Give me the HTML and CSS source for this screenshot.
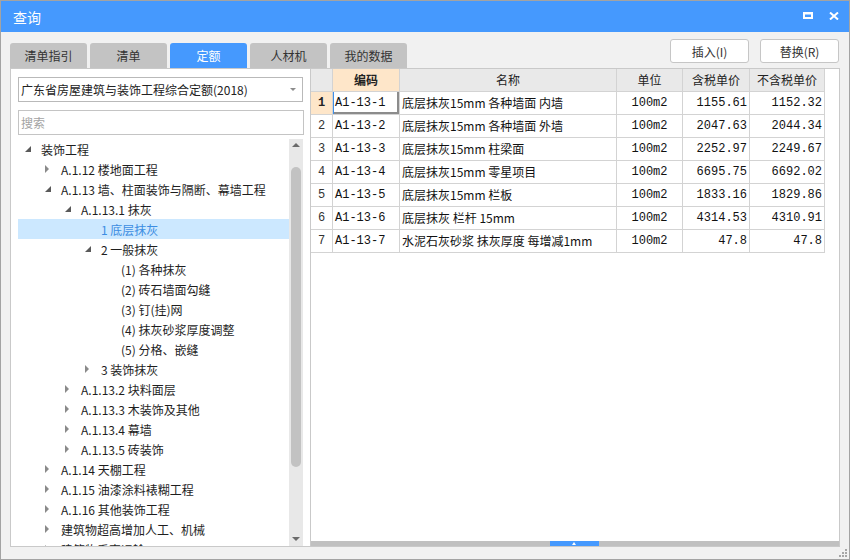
FILE: index.html
```html
<!DOCTYPE html>
<html lang="zh">
<head>
<meta charset="utf-8">
<title>查询</title>
<link rel="stylesheet" href="styles.css">
</head>
<body>
<div class="window">
  <div class="titlebar">
    <span class="title">查询</span>
    <div class="controls">
      <svg class="ico-max" width="10" height="7" viewBox="0 0 10 7"><path fill="#fff" fill-rule="evenodd" d="M0 0H10V7H0Z M2 2.5V5H8V2.5Z"/></svg>
      <svg class="ico-close" width="10" height="8" viewBox="0 0 10 8"><path d="M1 0.5L9 7.5M9 0.5L1 7.5" stroke="#fff" stroke-width="2"/></svg>
    </div>
  </div>

  <div class="toolbar">
    <div class="tabs">
      <div class="tab">清单指引</div>
      <div class="tab">清单</div>
      <div class="tab active">定额</div>
      <div class="tab">人材机</div>
      <div class="tab">我的数据</div>
    </div>
    <div class="actions">
      <button class="btn">插入(I)</button>
      <button class="btn">替换(R)</button>
    </div>
  </div>

  <div class="main">
    <div class="left">
      <div class="select"><span>广东省房屋建筑与装饰工程综合定额(2018)</span><span class="caret"></span></div>
      <div class="search">搜索</div>
      <div class="tree-wrap">
        <div class="tree">
          <div class="node l0"><span class="tg open"></span><span>装饰工程</span></div>
          <div class="node l1"><span class="tg closed"></span><span>A.1.12 楼地面工程</span></div>
          <div class="node l1"><span class="tg open"></span><span>A.1.13 墙、柱面装饰与隔断、幕墙工程</span></div>
          <div class="node l2"><span class="tg open"></span><span>A.1.13.1 抹灰</span></div>
          <div class="node l3 selected"><span class="tg"></span><span>1 底层抹灰</span></div>
          <div class="node l3"><span class="tg open"></span><span>2 一般抹灰</span></div>
          <div class="node l4"><span class="tg"></span><span>(1) 各种抹灰</span></div>
          <div class="node l4"><span class="tg"></span><span>(2) 砖石墙面勾缝</span></div>
          <div class="node l4"><span class="tg"></span><span>(3) 钉(挂)网</span></div>
          <div class="node l4"><span class="tg"></span><span>(4) 抹灰砂浆厚度调整</span></div>
          <div class="node l4"><span class="tg"></span><span>(5) 分格、嵌缝</span></div>
          <div class="node l3"><span class="tg closed"></span><span>3 装饰抹灰</span></div>
          <div class="node l2"><span class="tg closed"></span><span>A.1.13.2 块料面层</span></div>
          <div class="node l2"><span class="tg closed"></span><span>A.1.13.3 木装饰及其他</span></div>
          <div class="node l2"><span class="tg closed"></span><span>A.1.13.4 幕墙</span></div>
          <div class="node l2"><span class="tg closed"></span><span>A.1.13.5 砖装饰</span></div>
          <div class="node l1"><span class="tg closed"></span><span>A.1.14 天棚工程</span></div>
          <div class="node l1"><span class="tg closed"></span><span>A.1.15 油漆涂料裱糊工程</span></div>
          <div class="node l1"><span class="tg closed"></span><span>A.1.16 其他装饰工程</span></div>
          <div class="node l1"><span class="tg closed"></span><span>建筑物超高增加人工、机械</span></div>
          <div class="node l1"><span class="tg closed"></span><span>建筑物垂直运输</span></div>
        </div>
        <div class="vscroll">
          <span class="arrow-up"></span>
          <span class="thumb"></span>
          <span class="arrow-down"></span>
        </div>
      </div>
    </div>

    <div class="right">
      <div class="grid">
        <div class="hd"></div>
        <div class="hd key">编码</div>
        <div class="hd">名称</div>
        <div class="hd">单位</div>
        <div class="hd">含税单价</div>
        <div class="hd">不含税单价</div>

        <div class="rn cur">1</div><div class="c code sel">A1-13-1</div><div class="c name">底层抹灰15mm 各种墙面 内墙</div><div class="c unit">100m2</div><div class="c num">1155.61</div><div class="c num">1152.32</div>
        <div class="rn">2</div><div class="c code">A1-13-2</div><div class="c name">底层抹灰15mm 各种墙面 外墙</div><div class="c unit">100m2</div><div class="c num">2047.63</div><div class="c num">2044.34</div>
        <div class="rn">3</div><div class="c code">A1-13-3</div><div class="c name">底层抹灰15mm 柱梁面</div><div class="c unit">100m2</div><div class="c num">2252.97</div><div class="c num">2249.67</div>
        <div class="rn">4</div><div class="c code">A1-13-4</div><div class="c name">底层抹灰15mm 零星项目</div><div class="c unit">100m2</div><div class="c num">6695.75</div><div class="c num">6692.02</div>
        <div class="rn">5</div><div class="c code">A1-13-5</div><div class="c name">底层抹灰15mm 栏板</div><div class="c unit">100m2</div><div class="c num">1833.16</div><div class="c num">1829.86</div>
        <div class="rn">6</div><div class="c code">A1-13-6</div><div class="c name">底层抹灰 栏杆 15mm</div><div class="c unit">100m2</div><div class="c num">4314.53</div><div class="c num">4310.91</div>
        <div class="rn">7</div><div class="c code">A1-13-7</div><div class="c name">水泥石灰砂浆 抹灰厚度 每增减1mm</div><div class="c unit">100m2</div><div class="c num">47.8</div><div class="c num">47.8</div>
      </div>
      <div class="spacer"></div>
      <div class="hscroll"><span class="hthumb"></span></div>
    </div>
  </div>

  <div class="footer">
    <svg width="9" height="9" viewBox="0 0 9 9"><g fill="#a6a6a6"><rect x="6" y="0" width="2" height="2"/><rect x="3" y="3" width="2" height="2"/><rect x="6" y="3" width="2" height="2"/><rect x="0" y="6" width="2" height="2"/><rect x="3" y="6" width="2" height="2"/><rect x="6" y="6" width="2" height="2"/></g></svg>
  </div>
</div>
</body>
</html>
```

FILE: styles.css
```css
* { box-sizing: border-box; }

body {
  margin: 0;
  font-family: "Noto Sans CJK SC", "Noto Sans", sans-serif;
  font-size: 12px;
  color: #222;
}

.window {
  width: 850px;
  height: 560px;
  border: 1px solid #a3a3a3;
  background: #f1f1f1;
  display: flex;
  flex-direction: column;
  overflow: hidden;
}

/* title bar */
.titlebar {
  height: 31px;
  flex: none;
  background: #4599fe;
  display: flex;
  align-items: center;
  padding: 0 10px 0 12px;
  color: #fff;
}
.title { flex: 1; font-size: 14px; }
.controls { display: flex; align-items: center; gap: 16px; }
.ico-max { margin-top: -2px; }
.ico-close { margin-top: -1px; }

/* toolbar */
.toolbar {
  height: 36px;
  flex: none;
  display: flex;
  padding: 0 10px 0 9px;
}
.tabs { display: flex; gap: 3px; align-self: flex-end; }
.tab {
  width: 77px;
  height: 25px;
  line-height: 25px;
  text-align: center;
  background: #c3c3c3;
  border-radius: 3px 3px 0 0;
  color: #333;
  font-size: 12px;
}
.tab.active { background: #4599fe; color: #fff; }
.actions { margin-left: auto; display: flex; gap: 11px; padding-top: 7px; }
.btn {
  width: 79px;
  height: 24px;
  padding: 0;
  border: 1px solid #c6c6c6;
  border-radius: 3px;
  background: #fff;
  font-family: inherit;
  font-size: 12px;
  color: #333;
}

/* main */
.main {
  flex: 1;
  display: flex;
  padding: 0 9px;
  min-height: 0;
}

.left {
  width: 301px;
  flex: none;
  background: #fff;
  border: 1px solid #c9c9c9;
  display: flex;
  flex-direction: column;
  padding: 8px 0 0 7px;
}
.select {
  width: 285px;
  height: 25px;
  border: 1px solid #b9b9b9;
  display: flex;
  align-items: center;
  padding-left: 2px;
  color: #222;
}
.caret {
  margin-left: auto;
  margin-right: 6px;
  width: 0;
  height: 0;
  border-left: 3px solid transparent;
  border-right: 3px solid transparent;
  border-top: 3px solid #8c8c8c;
}
.search {
  width: 286px;
  height: 25px;
  margin-top: 8px;
  border: 1px solid #c4c4c4;
  padding-left: 2px;
  line-height: 23px;
  color: #a3a3a3;
}
.tree-wrap {
  flex: 1;
  min-height: 0;
  margin-top: 4px;
  display: flex;
}
.tree {
  width: 271px;
  flex: none;
  overflow: hidden;
}
.node {
  height: 20px;
  display: flex;
  align-items: center;
  white-space: nowrap;
  color: #1e1e1e;
}
.node.l0 { padding-left: 7px; }
.node.l1 { padding-left: 27px; }
.node.l2 { padding-left: 47px; }
.node.l3 { padding-left: 67px; }
.node.l4 { padding-left: 87px; }
.node.selected { background: #cce8ff; color: #3c8de2; }
.tg { width: 16px; flex: none; height: 8px; position: relative; }
.tg.open::before {
  content: "";
  position: absolute;
  left: 0;
  top: 1px;
  border-bottom: 6px solid #595959;
  border-left: 6px solid transparent;
}
.tg.closed::before {
  content: "";
  position: absolute;
  left: 0;
  top: 0;
  border-left: 4px solid #8a8a8a;
  border-top: 4px solid transparent;
  border-bottom: 4px solid transparent;
}

.vscroll {
  width: 14px;
  flex: none;
  background: #e8e8e8;
  display: flex;
  flex-direction: column;
  align-items: center;
}
.arrow-up {
  margin-top: 4px;
  border-left: 4px solid transparent;
  border-right: 4px solid transparent;
  border-bottom: 4px solid #6b6b6b;
}
.thumb {
  margin-top: 20px;
  width: 10px;
  height: 300px;
  border-radius: 5px;
  background: #c2c2c2;
}
.arrow-down {
  margin-top: auto;
  margin-bottom: 5px;
  border-left: 4px solid transparent;
  border-right: 4px solid transparent;
  border-top: 4px solid #6b6b6b;
}

/* right table */
.right {
  flex: 1;
  background: #fff;
  border: 1px solid #c9c9c9;
  border-left: none;
  display: flex;
  flex-direction: column;
}
.grid {
  display: grid;
  grid-template-columns: 22px 67px 217px 66px 67px 75px;
  grid-auto-rows: 23px;
  width: 514px;
}
.grid > div {
  border-right: 1px solid #d3d3d3;
  border-bottom: 1px solid #d3d3d3;
  white-space: nowrap;
  overflow: hidden;
}
.hd {
  background: #e9e9e9;
  text-align: center;
  line-height: 22px;
  font-size: 12px;
  color: #222;
}
.hd.key { background: #fee6c9; font-weight: bold; }
.rn, .c {
  font-family: "Liberation Mono", "Noto Sans CJK SC", monospace;
  font-size: 12px;
  line-height: 22px;
  color: #111;
}
.rn { text-align: center; color: #333; }
.rn.cur { background: #fee6c9; font-weight: bold; color: #222; }
.code { padding-left: 2px; }
.name { padding-left: 2px; font-family: "Noto Sans CJK SC", sans-serif; }
.unit { text-align: center; }
.num { text-align: right; padding-right: 2px; }
.c.sel { box-shadow: inset 1px 0 0 #3f8fe8, inset -2px -2px 0 #8c8c8c; }
.spacer { flex: 1; }
.hscroll {
  height: 5px;
  flex: none;
  background: #c0c0c0;
  display: flex;
}
.hthumb {
  margin-left: 239px;
  width: 49px;
  height: 5px;
  background: #4599fe;
  position: relative;
}
.hthumb::after {
  content: "";
  position: absolute;
  left: 22px;
  top: 1px;
  border-left: 2px solid transparent;
  border-right: 2px solid transparent;
  border-bottom: 3px solid #fff;
}

.footer {
  height: 12px;
  flex: none;
  display: flex;
  justify-content: flex-end;
  align-items: flex-end;
  padding: 0 1px 1px 0;
}
```
